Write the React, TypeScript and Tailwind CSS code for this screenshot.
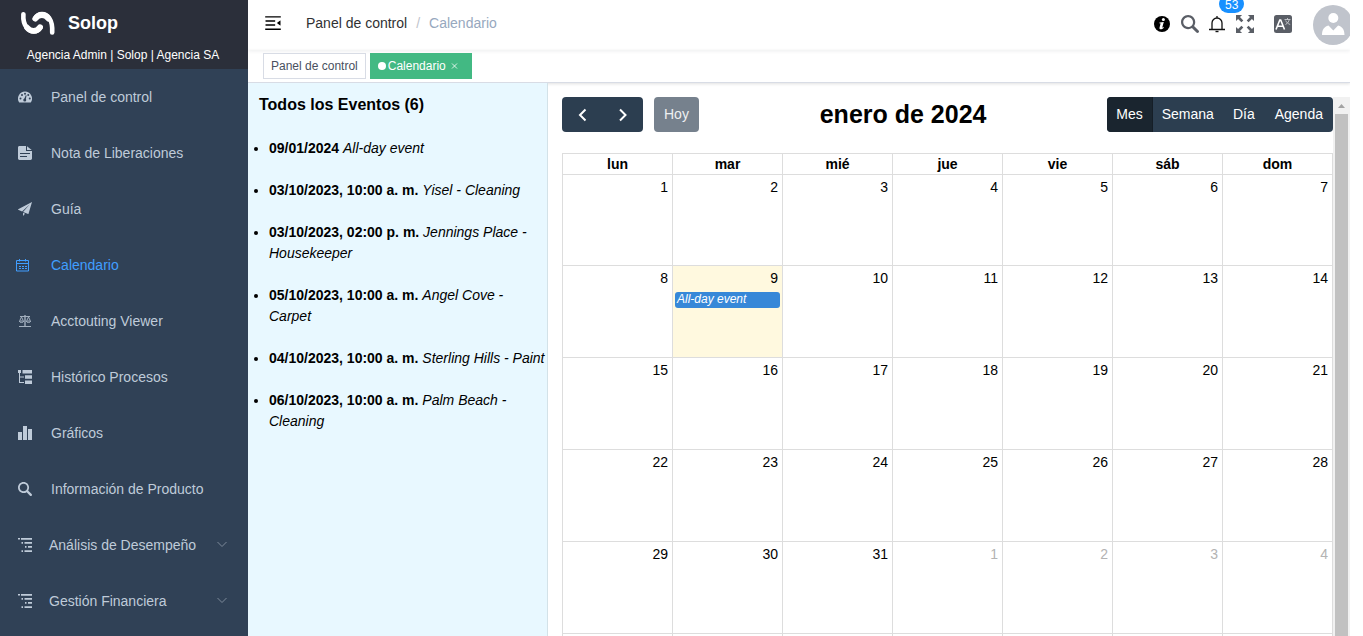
import type { ReactNode } from "react";

type IconProps = { className?: string };

const DashboardIcon = () => (
  <svg viewBox="0 0 28 28" className="h-[14px] w-[14px]" aria-hidden="true">
    <path fill="currentColor" d="M14 3a14 14 0 0 0-11.8 21.500c.2.400.5.500.8.500h22c.300 0 .6-.2.800-.5A14 14 0 0 0 14 3z" />
    <g fill="#304156">
      <circle cx="5" cy="17" r="2" />
      <circle cx="8" cy="10" r="2" />
      <circle cx="14" cy="7.500" r="2" />
      <circle cx="20.500" cy="10" r="2" />
      <circle cx="23.500" cy="17" r="2" />
      <circle cx="13.500" cy="20" r="3" />
      <path d="M12.500 18l3-7.500 1.700.500-1.700 8z" />
    </g>
  </svg>
);

const DocumentIcon = () => (
  <svg viewBox="0 0 14 14" className="h-[14px] w-[14px]" aria-hidden="true">
    <path
      fill="currentColor"
      fillRule="evenodd"
      d="M1.500 0H8v5h6v7.600c0 .8-.7 1.400-1.500 1.400h-11C.7 14 0 13.400 0 12.600V1.400C0 .6.700 0 1.500 0zM2 7v1h10V7H2zm0 3v1h7v-1H2z"
    />
    <path fill="currentColor" d="M9 .300L13.700 4H9z" />
  </svg>
);

const PlaneIcon = () => (
  <svg viewBox="0 0 128 128" className="h-[14px] w-[14px]" fill="currentColor" aria-hidden="true">
    <path d="M1.482 70.131l36.204 16.180 69.932-65.485-61.380 70.594 46.435 18.735c1.119.425 2.397-.17 2.797-1.363v-.085L127.998.047 1.322 65.874c-1.120.597-1.519 1.959-1.040 3.151.320.511.720.937 1.200 1.107zm44.676 57.821L64.220 107.260l-18.062-7.834v28.527z" />
  </svg>
);

const CalendarIcon = () => (
  <svg viewBox="0 0 14 14" className="-ml-0.5 h-[14px] w-[14px]" fill="none" stroke="currentColor" aria-hidden="true">
    <path d="M.5 2.500h12v10.500H.5zM.5 5.500h12" />
    <path d="M3.500 1v2.500M9.500 1v2.500" />
    <path d="M3 8.500h2m1 0h2m1 0h2M3 10.500h2m1 0h2m1 0h2" />
  </svg>
);

const ScaleIcon = () => (
  <svg viewBox="0 0 14 14" className="h-[14px] w-[14px] opacity-80" fill="none" stroke="currentColor" aria-hidden="true">
    <path d="M2 2.500h10M1 12.500h12" />
    <path d="M7 1v11" strokeWidth="1.400" />
    <path d="M3.500 3L1.800 6.500M3.500 3l1.700 3.500M10.500 3L8.800 6.500M10.500 3l1.700 3.500" />
    <path d="M1.200 7h4.600c-.3 2-4.300 2-4.600 0zM8.200 7h4.600c-.3 2-4.300 2-4.600 0z" />
  </svg>
);

const TreeTableIcon = () => (
  <svg viewBox="0 0 14 14" className="h-[14px] w-[14px]" fill="currentColor" aria-hidden="true">
    <path d="M0 0h3v3H0zM4.500 0H14v3.400H4.500zM7 5.300h7v3.400H7zM7 10.600h7V14H7z" />
    <path d="M1 3h1v3.500h4v1H2V12h4v1H1z" />
  </svg>
);

const ChartIcon = () => (
  <svg viewBox="0 0 128 128" className="h-[14px] w-[14px]" fill="currentColor" aria-hidden="true">
    <path d="M0 54.857h36.571V128H0V54.857zM91.429 27.430H128V128H91.429V27.429zM45.714 0h36.572v128H45.714V0z" />
  </svg>
);

const SearchIcon = ({ className = "h-[14px] w-[14px]" }: IconProps) => (
  <svg viewBox="0 0 128 128" className={className} fill="currentColor" aria-hidden="true">
    <path d="M124.884 109.812L94.256 79.166c-.357-.357-.757-.629-1.129-.914a50.366 50.366 0 0 0 8.186-27.590C101.327 22.689 78.656 0 50.670 0 22.685 0 0 22.688 0 50.663c0 27.989 22.685 50.663 50.656 50.663 10.186 0 19.643-3.030 27.600-8.201.286.385.557.771.900 1.114l30.628 30.632a10.633 10.633 0 0 0 7.543 3.129c2.728 0 5.457-1.043 7.543-3.115 4.171-4.157 4.171-10.915.014-15.073M50.671 85.338C31.557 85.338 16 69.780 16 50.663c0-19.102 15.557-34.661 34.670-34.661 19.115 0 34.657 15.559 34.657 34.675 0 19.102-15.557 34.661-34.656 34.661" />
  </svg>
);

const NestedIcon = () => (
  <svg viewBox="0 0 14 14" className="h-[14px] w-[14px]" fill="currentColor" aria-hidden="true">
    <path d="M0 0h2v1.500H0zM3 0h11v1.700H3zM3.500 4h1.500v1.700H3.500zM6.500 4H14v1.700H6.500zM7 8h1.500v1.700H7zM10 8h4v1.700h-4zM3.500 12.200h1.500V14H3.500zM6.500 12.200H14V14H6.500z" />
  </svg>
);

const ChevronIcon = () => (
  <svg viewBox="0 0 12 12" className="h-3 w-3 text-[#7d8a9a]" fill="none" stroke="currentColor" aria-hidden="true">
    <path d="M1.500 3L6 7.500 10.500 3" />
  </svg>
);

const LogoIcon = () => (
  <svg viewBox="0 0 36 26" className="h-[26px] w-9" fill="none" stroke="#fff" strokeLinecap="round" strokeLinejoin="round" aria-hidden="true">
    <path d="M3.400 4.200C3 9.500 3.500 14 7 18c3.500 4.200 10 5.200 13.700-.8" strokeWidth="4.600" />
    <path d="M7 17.500c4 4.800 9.500 4.500 13-.3" strokeWidth="5.800" />
    <path d="M14.800 8.600C18.500 2.500 25.500 3 29.200 8c2.700 3.800 3.300 8.500 3 14.500" strokeWidth="4.600" />
    <path d="M15.400 8.600c3.500-4.800 9.500-4.800 13 0" strokeWidth="5.800" />
  </svg>
);

const FoldIcon = () => (
  <svg viewBox="0 0 1024 1024" className="h-5 w-5 rotate-180" fill="currentColor" aria-hidden="true">
    <path d="M408 442h480c4.400 0 8-3.600 8-8v-56c0-4.400-3.600-8-8-8H408c-4.400 0-8 3.600-8 8v56c0 4.400 3.600 8 8 8zm-8 204c0 4.400 3.600 8 8 8h480c4.400 0 8-3.600 8-8v-56c0-4.400-3.600-8-8-8H408c-4.400 0-8 3.600-8 8v56zm504-486H120c-4.400 0-8 3.600-8 8v56c0 4.400 3.600 8 8 8h784c4.400 0 8-3.600 8-8v-56c0-4.400-3.600-8-8-8zm0 632H120c-4.400 0-8 3.600-8 8v56c0 4.400 3.600 8 8 8h784c4.400 0 8-3.600 8-8v-56c0-4.400-3.600-8-8-8zM142.400 642.100L298.700 519a8.840 8.840 0 0 0 0-13.900L142.400 381.900c-5.800-4.600-14.400-.5-14.400 6.900v246.300a8.900 8.900 0 0 0 14.400 7z" />
  </svg>
);

const InfoIcon = () => (
  <svg viewBox="0 0 16 16" className="h-4 w-4" aria-hidden="true">
    <circle cx="8" cy="8" r="8" fill="#000" />
    <circle cx="9.400" cy="3.600" r="1.500" fill="#fff" />
    <path d="M5.500 6.500l4.300-.5-1.600 5.800 1.600-1-.3 1.100c-1.400 1.700-4.400 2-4-.2L6.600 7.400l-1.300-.1z" fill="#fff" />
  </svg>
);

const BellIcon = () => (
  <svg viewBox="0 0 18 18" className="h-[18px] w-[18px]" fill="none" stroke="#111" aria-hidden="true">
    <path d="M1 14.500h16M4 14.500V8a5 5 0 0 1 10 0v6.500M9 1v2" strokeWidth="1.300" />
    <path d="M7.500 16.500h3" strokeWidth="1.400" />
  </svg>
);

const FullscreenIcon = () => (
  <svg viewBox="0 0 128 128" className="h-[18px] w-[18px]" fill="currentColor" aria-hidden="true">
    <path d="M38.470 52L52 38.462l-23.648-23.670L43.209 0H0v43.137l14.757-14.865L38.470 52zm74.773 47.726L89.526 76 76 89.536l23.648 23.672L84.795 128H128V84.863l-14.757 14.863zM89.538 52l23.668-23.648L128 43.207V0H84.866l14.760 14.757L76 38.470 89.538 52zM38.460 76L14.792 99.651 0 84.794V128h43.137l-14.865-14.757L52 89.530 38.460 76z" />
  </svg>
);

const LanguageIcon = () => (
  <svg viewBox="0 0 18 18" className="h-[18px] w-[18px]" fill="none" aria-hidden="true">
    <rect width="18" height="18" rx="2.500" fill="#5a5e66" />
    <path d="M2 14.500L5.800 5h.9l3.800 9.500M3.500 11.200h5.500" stroke="#fff" strokeWidth="1.600" />
    <path d="M10.500 4.500h6M13.500 3v1.500M11.500 9.500c2-1 3.500-3 3.700-5M11.700 5.500c.8 2 2.300 3.200 4.500 4" stroke="#d5d7da" strokeWidth=".8" />
  </svg>
);

const AvatarIcon = () => (
  <svg viewBox="0 0 40 40" className="h-10 w-10" aria-hidden="true">
    <circle cx="20" cy="20" r="20" fill="#c0c4cc" />
    <circle cx="20.300" cy="13" r="5" fill="#fff" />
    <path fill="#fff" d="M9 30c0-5 2-8.500 6.500-9.500l4.800 5 4.800-5C29.500 21.500 31.500 25 31.500 30z" />
  </svg>
);

const menu: { label: string; icon: ReactNode; active?: boolean; nested?: boolean }[] = [
  { label: "Panel de control", icon: <DashboardIcon /> },
  { label: "Nota de Liberaciones", icon: <DocumentIcon /> },
  { label: "Guía", icon: <PlaneIcon /> },
  { label: "Calendario", icon: <CalendarIcon />, active: true },
  { label: "Acctouting Viewer", icon: <ScaleIcon /> },
  { label: "Histórico Procesos", icon: <TreeTableIcon /> },
  { label: "Gráficos", icon: <ChartIcon /> },
  { label: "Información de Producto", icon: <SearchIcon /> },
  { label: "Análisis de Desempeño", icon: <NestedIcon />, nested: true },
  { label: "Gestión Financiera", icon: <NestedIcon />, nested: true },
];

const events = [
  ["09/01/2024", "All-day event"],
  ["03/10/2023, 10:00 a. m.", "Yisel - Cleaning"],
  ["03/10/2023, 02:00 p. m.", "Jennings Place - Housekeeper"],
  ["05/10/2023, 10:00 a. m.", "Angel Cove - Carpet"],
  ["04/10/2023, 10:00 a. m.", "Sterling Hills - Paint"],
  ["06/10/2023, 10:00 a. m.", "Palm Beach - Cleaning"],
];

const weekdays = ["lun", "mar", "mié", "jue", "vie", "sáb", "dom"];
const weeks = Array.from({ length: 5 }, (_, w) => Array.from({ length: 7 }, (_, d) => w * 7 + d + 1));

function Sidebar() {
  return (
    <aside className="flex w-[248px] shrink-0 flex-col overflow-hidden bg-[#304156]">
      <header className="h-[69px] shrink-0 bg-[#2b2f3a] pt-2.5 text-white">
        <div className="flex items-center gap-3 pl-5">
          <LogoIcon />
          <h1 className="text-lg leading-[26px] font-bold">Solop</h1>
        </div>
        <p className="mt-2.5 pr-0.5 text-center text-xs leading-[18px]">Agencia Admin | Solop | Agencia SA</p>
      </header>
      <nav>
        {menu.map((item) => (
          <a
            key={item.label}
            href="#"
            className={`flex h-14 items-center pr-5 pl-[18px] text-sm ${item.active ? "text-[#409eff]" : "text-[#bfcbd9]"}`}
          >
            <span className={`shrink-0 ${item.nested ? "w-[31px]" : "w-[33px]"}`}>{item.icon}</span>
            <span className="flex-1">{item.label}</span>
            {item.nested && <ChevronIcon />}
          </a>
        ))}
      </nav>
    </aside>
  );
}

function Navbar() {
  return (
    <header className="flex h-[50px] shrink-0 items-center justify-between pl-[15px] shadow-[0_1px_4px_rgba(0,21,41,0.08)]">
      <div className="flex items-center gap-[23px] pb-1">
        <button aria-label="Contraer menú" className="text-black">
          <FoldIcon />
        </button>
        <nav className="flex items-center text-sm" aria-label="Ruta">
          <a href="#" className="text-[#303133]">Panel de control</a>
          <span className="mx-[9px] text-[#c0c4cc]">/</span>
          <span className="text-[#97a8be]">Calendario</span>
        </nav>
      </div>
      <div className="-mr-[3px] flex items-center text-[#5a5e66]">
        <div className="flex items-center pb-0.5">
          <button aria-label="Información"><InfoIcon /></button>
          <button aria-label="Buscar" className="ml-[11px]"><SearchIcon className="h-[18px] w-[18px]" /></button>
          <button aria-label="Notificaciones" className="relative ml-[9px]">
            <BellIcon />
            <span className="absolute -top-5 left-[11px] flex h-[18px] items-center rounded-full bg-[#1890ff] px-1.5 pt-0.5 text-xs text-white">53</span>
          </button>
          <button aria-label="Pantalla completa" className="ml-[10px]"><FullscreenIcon /></button>
          <button aria-label="Idioma" className="ml-5"><LanguageIcon /></button>
        </div>
        <button aria-label="Perfil" className="ml-[21px]"><AvatarIcon /></button>
      </div>
    </header>
  );
}

function Tags() {
  return (
    <nav aria-label="Pestañas" className="flex h-[33px] shrink-0 items-start gap-1 border-b border-[#d8dce5] pt-[3px] pl-[15px] text-xs shadow-[0_1px_3px_rgba(0,0,0,0.12)]">
      <a href="#" className="flex h-[26px] items-center border border-[#d8dce5] px-[7px] text-[#495060]">Panel de control</a>
      <a href="#" className="flex h-[26px] items-center bg-[#42b983] px-2 text-white">
        <span className="mr-0.5 h-2 w-2 rounded-full bg-white" />
        Calendario
        <svg viewBox="0 0 16 16" className="ml-0.5 h-4 w-4" stroke="#fff" strokeOpacity=".8" aria-hidden="true">
          <path d="M4 5.500l5 5m0-5l-5 5" />
        </svg>
      </a>
    </nav>
  );
}

function EventList() {
  return (
    <section className="w-[300px] shrink-0 border-r border-[#d3e2e8] bg-[#e8f8ff] text-sm leading-[21px] text-black">
      <h2 className="pt-[11px] pl-[11px] text-base leading-[21px] font-bold">Todos los Eventos (6)</h2>
      <ul className="mt-[23px] list-disc space-y-[21px] pl-[21px]">
        {events.map(([date, title]) => (
          <li key={date + title}>
            <b>{date}</b> <i>{title}</i>
          </li>
        ))}
      </ul>
    </section>
  );
}

function Calendar() {
  return (
    <section className="min-w-0 flex-1 overflow-hidden text-black">
      <div className="flex h-[35px] items-center justify-between text-sm text-white">
        <div className="flex gap-[11px]">
          <div className="flex h-[35px] overflow-hidden rounded bg-[#2c3e50]">
            <button aria-label="Anterior" className="flex w-[41px] items-center justify-center">
              <svg viewBox="0 0 12 16" className="h-4 w-3" fill="none" stroke="currentColor" strokeWidth="2"><path d="M8.500 2.500L3 8l5.500 5.500" /></svg>
            </button>
            <button aria-label="Siguiente" className="flex w-10 items-center justify-center">
              <svg viewBox="0 0 12 16" className="h-4 w-3" fill="none" stroke="currentColor" strokeWidth="2"><path d="M3 2.500L8.500 8 3 13.500" /></svg>
            </button>
          </div>
          <button disabled className="h-[35px] rounded bg-[#76818d] px-2.5 pb-0.5 text-[#eef0f1]">Hoy</button>
        </div>
        <h2 className="text-[25px] leading-[33px] font-bold text-black">enero de 2024</h2>
        <div className="flex h-[35px] overflow-hidden rounded bg-[#2c3e50]">
          <button className="border-r border-[#151e27] bg-[#1a252f] px-[9px] pb-0.5">Mes</button>
          <button className="px-[9px] pb-0.5">Semana</button>
          <button className="px-[10px] pb-0.5">Día</button>
          <button className="px-[10px] pb-0.5">Agenda</button>
        </div>
      </div>
      <table className="mt-[21px] w-full table-fixed border-collapse text-sm leading-5">
        <thead>
          <tr className="h-[21px]">
            {weekdays.map((day) => (
              <th key={day} className="border border-[#ddd] p-0 font-bold">{day}</th>
            ))}
          </tr>
        </thead>
        <tbody>
          {weeks.map((week) => (
            <tr key={week[0]} className="h-[92px] first:h-[91px]">
              {week.map((day) => (
                <td key={day} className={`border border-[#ddd] p-0 align-top ${day === 9 ? "bg-[#fff9df]" : ""}`}>
                  <div className={`pt-0.5 pr-1 text-right ${day > 31 ? "text-[#b3b3b3]" : ""}`}>{day > 31 ? day - 31 : day}</div>
                  {day === 9 && (
                    <a href="#" className="mx-0.5 mt-1 block h-4 rounded-[3px] bg-[#3788d8] px-0.5 text-xs leading-[14px] text-white italic">All-day event</a>
                  )}
                </td>
              ))}
            </tr>
          ))}
          <tr className="h-[92px]">
            {weekdays.map((day) => (
              <td key={day} className="border border-[#ddd] p-0" />
            ))}
          </tr>
        </tbody>
      </table>
    </section>
  );
}

function ScrollTrack() {
  return (
    <div className="flex w-[17px] shrink-0 flex-col items-center bg-[#f1f1f1]" aria-hidden="true">
      <svg viewBox="0 0 17 17" className="h-[17px] w-[17px]"><path d="M5 11l3.500-4 3.500 4z" fill="#a3a3a3" /></svg>
      <div className="w-[13px] flex-1 bg-[#c1c1c1]" />
    </div>
  );
}

export default function App() {
  return (
    <div className="flex h-screen overflow-hidden bg-white pr-[13px] font-['Liberation_Sans',Arial,sans-serif]">
      <Sidebar />
      <div className="flex min-w-0 flex-1 flex-col overflow-hidden">
        <Navbar />
        <Tags />
        <main className="flex min-h-0 flex-1">
          <EventList />
          <div className="flex min-w-0 flex-1 pt-3.5 pl-3.5">
            <Calendar />
            <ScrollTrack />
          </div>
        </main>
      </div>
    </div>
  );
}
